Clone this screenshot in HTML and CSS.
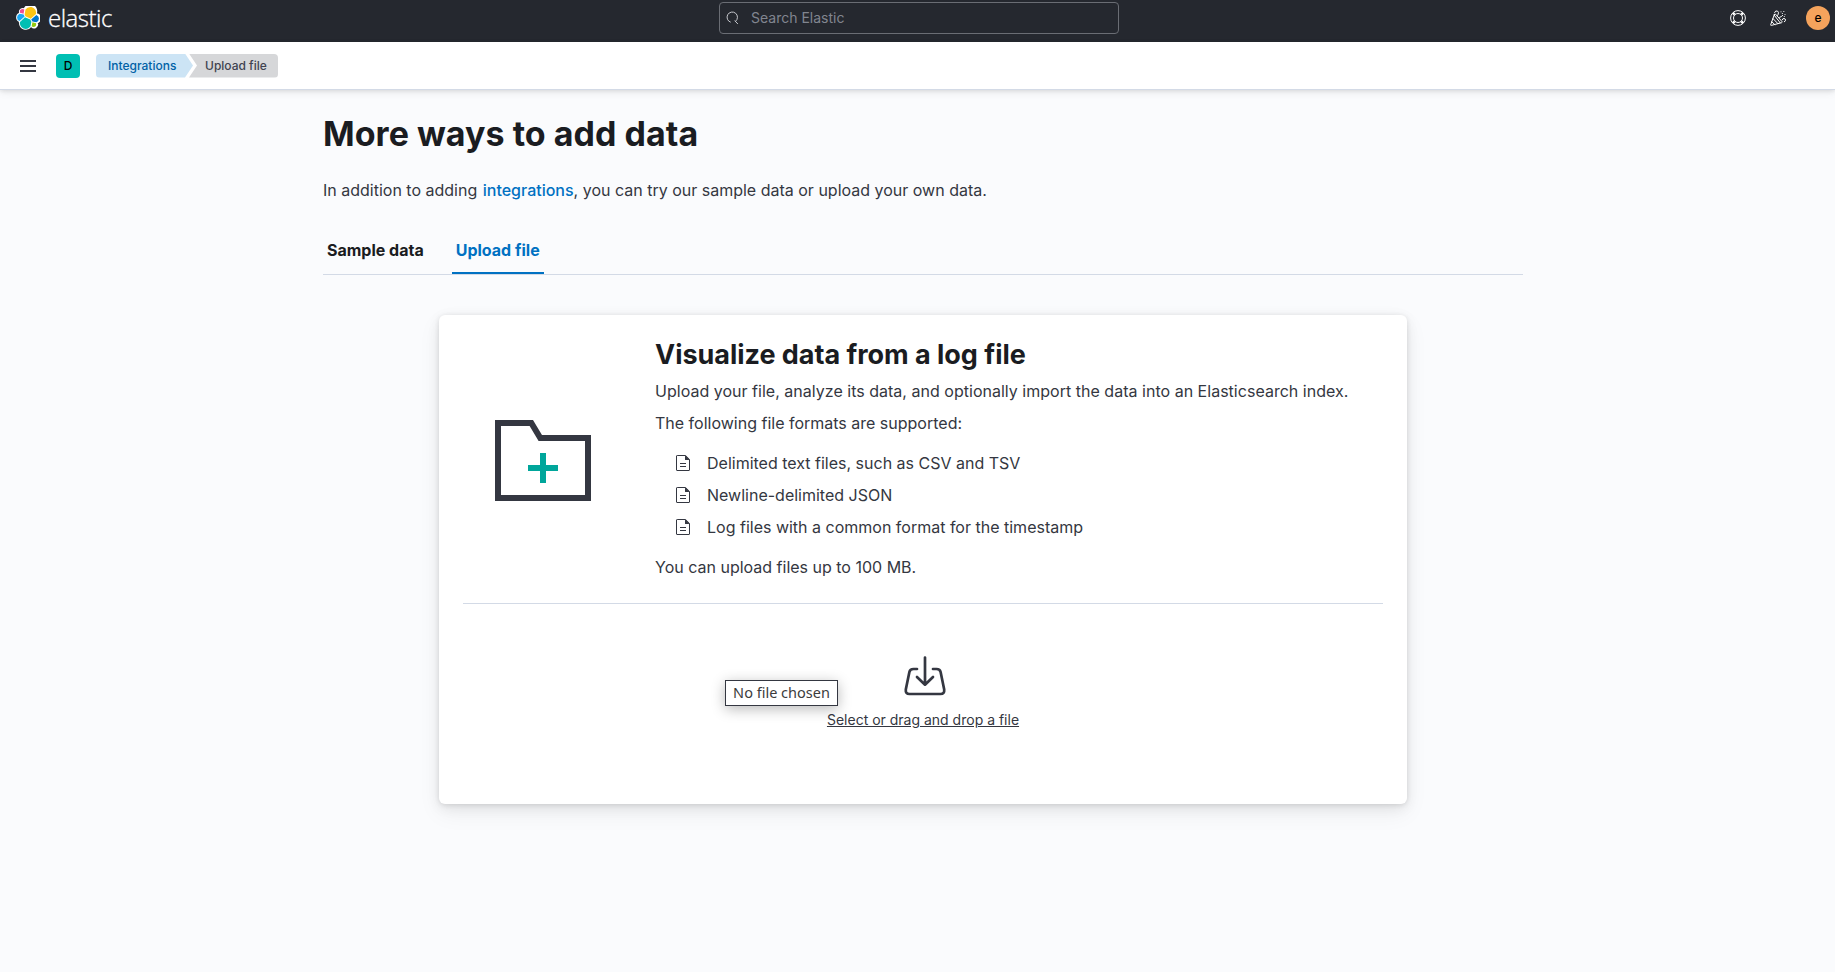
FILE: index.html
```html
<!DOCTYPE html>
<html lang="en">
<head>
<meta charset="utf-8">
<title>Upload file - Elastic</title>
<link rel="stylesheet" href="styles.css">
</head>
<body>
<header class="topbar">
  <a class="brand">
    <svg class="brand-mark" viewBox="0 0 32 32">
      <path class="halo" d="M5.300 9A3.800 3.800 0 0 1 11.100 4.730 7.720 7.720 0 0 1 26.800 9.230L26.650 10.900A5.300 5.300 0 0 1 27.120 21.800 3.800 3.800 0 0 1 20.870 27.160L19.300 27.160A7.750 7.750 0 0 1 5.200 22.700L4.800 20.130A5.290 5.290 0 0 1 4.870 10.210z"/>
      <path fill="#fec514" d="M12.58 13.787l7.002 3.211 7.066-6.213a7.854 7.854 0 00.152-1.557c0-4.287-3.47-7.776-7.735-7.776a7.722 7.722 0 00-6.384 3.379l-1.176 6.126 1.075 2.83z"/>
      <path fill="#00bfb3" d="M5.333 21.215a7.973 7.973 0 00-.151 1.57c0 4.3 3.48 7.798 7.757 7.798 2.573 0 4.98-1.281 6.428-3.422l1.166-6.111-1.556-2.991-7.03-3.215-6.614 6.371z"/>
      <path fill="#f04e98" d="M5.288 9.067l4.8 1.14L11.14 4.73a3.774 3.774 0 00-2.298-.78 3.815 3.815 0 00-3.801 3.822c0 .442.084.878.247 1.295z"/>
      <path fill="#1ba9f5" d="M4.871 10.214A5.294 5.294 0 001.4 15.19a5.275 5.275 0 003.383 4.94l6.733-6.117-1.236-2.655-5.41-1.144z"/>
      <path fill="#93c90e" d="M20.868 27.163c.659.509 1.46.79 2.292.79a3.797 3.797 0 003.785-3.816c0-.444-.084-.88-.247-1.295l-4.795-1.126-1.035 5.447z"/>
      <path fill="#07c" d="M21.846 20.565l5.274 1.233a5.33 5.33 0 003.48-5.004 5.29 5.29 0 00-3.396-4.94l-6.9 6.07 1.542 2.641z"/>
    </svg>
    <span class="brand-name">elastic</span>
  </a>
  <div class="search">
    <svg class="search-icon" viewBox="0 0 16 16" fill="none" stroke="currentColor"><path d="M5.700 12.200A5.200 5.200 0 1 1 10.500 11.300M9.700 10.600l3.200 3.400"/></svg>
    <span>Search Elastic</span>
  </div>
  <div class="actions">
    <svg class="icon" viewBox="0 0 16 16" fill="none" stroke="currentColor"><circle cx="8" cy="8" r="7.400"/><circle cx="8" cy="8" r="4.500"/><path stroke-width="2.600" d="M2.900 2.900l1.800 1.800M13.100 2.900l-1.800 1.800M2.900 13.100l1.800-1.800M13.100 13.100l-1.800-1.800"/></svg>
    <svg class="icon" viewBox="0 0 16 16" fill="none" stroke="currentColor" stroke-linejoin="round" stroke-linecap="round"><path d="M4.400 4.400L.7 14.700q-.2.8.6.7l10.300-2.700q1-.4.3-1.200L5.700 4.300q-.8-.7-1.300.1zM2.900 8.500l5 5.100M4.200 5.200l6 7.600M1.700 11.700l3.200 3M4.600 2.500Q5.500.2 7.400 1q1.700.9.8 3.300-.4 1.200-1 1.500M12.200 9.800q.4-1.400 1.800-1.300 1.700.3 1.500 1.700-.1 1.300-1.200 1.600M9.600 7.400q2-.6 3.100-2M11 1.800v.1M13.800 1.500v.1M12.400 3.400v.1M15 4.600v.1M14.300 6.400v.1"/></svg>
    <span class="avatar">e</span>
  </div>
</header>
<nav class="subbar">
  <svg class="menu" viewBox="0 0 16 12" fill="currentColor"><path d="M0 0h16v2H0zM0 5h16v2H0zM0 10h16v2H0z"/></svg>
  <span class="space">D</span>
  <div class="crumbs"><a class="crumb first">Integrations</a><span class="crumb last">Upload file</span></div>
</nav>
<main class="page">
  <h1>More ways to add data</h1>
  <p class="intro">In addition to adding <a>integrations</a>, you can try our sample data or upload your own data.</p>
  <div class="tabs"><a class="tab">Sample data</a><a class="tab active">Upload file</a></div>
  <section class="card">
    <div class="overview">
      <svg class="folder" viewBox="0 0 96 81"><path fill="none" stroke="#343741" stroke-width="6" d="M3 3h33.300l9 15H93v60H3z"/><path fill="#00a69b" d="M45 33h6v12h12v6H51v12h-6V51H33v-6h12z"/></svg>
      <div class="copy">
        <h2>Visualize data from a log file</h2>
        <p class="lead">Upload your file, analyze its data, and optionally import the data into an Elasticsearch index.</p>
        <p>The following file formats are supported:</p>
        <ul>
          <li><svg viewBox="0 0 14 16"><path fill="none" stroke="currentColor" d="M1.200.5H9.600L13.500 4.400V15q0 .5-.5.5H1Q.5 15.500.5 15V1Q.5.5 1.200.5zM4 8.500h6M4 11.500h6"/><path fill="currentColor" d="M9 .3L13.700 5H9.500Q9 5 9 4.500z"/></svg>Delimited text files, such as CSV and TSV</li>
          <li><svg viewBox="0 0 14 16"><path fill="none" stroke="currentColor" d="M1.200.5H9.600L13.500 4.400V15q0 .5-.5.5H1Q.5 15.500.5 15V1Q.5.5 1.200.5zM4 8.500h6M4 11.500h6"/><path fill="currentColor" d="M9 .3L13.700 5H9.500Q9 5 9 4.500z"/></svg>Newline-delimited JSON</li>
          <li><svg viewBox="0 0 14 16"><path fill="none" stroke="currentColor" d="M1.200.5H9.600L13.500 4.400V15q0 .5-.5.5H1Q.5 15.500.5 15V1Q.5.5 1.200.5zM4 8.500h6M4 11.500h6"/><path fill="currentColor" d="M9 .3L13.700 5H9.500Q9 5 9 4.500z"/></svg>Log files with a common format for the timestamp</li>
        </ul>
        <p>You can upload files up to 100 MB.</p>
      </div>
    </div>
    <div class="drop">
      <svg class="import" viewBox="0 0 42 40" fill="none" stroke="currentColor" stroke-width="2.700" stroke-linecap="round" stroke-linejoin="round"><path d="M13 13H9.500Q6 13 5.400 16L1.800 33.500Q1.300 38 5.500 38H36.500Q40.700 38 40.200 33.500L36.600 16Q36 13 32.500 13H29M21 1.500V28.500M13 21l8 7.700 8-7.700"/></svg>
      <span class="drop-text">Select or drag and drop a file</span>
      <span class="tip">No file chosen</span>
    </div>
  </section>
</main>
</body>
</html>
```
FILE: styles.css
```css
* { box-sizing: border-box; }
body { margin: 0; min-height: 972px; background: #fafbfd; color: #343741; font: 16px/24px Inter, sans-serif; }
h1, h2, p, ul { margin: 0; padding: 0; }
.topbar { height: 42px; background: #25282f; display: grid; grid-template-columns: 1fr 400px 1fr; align-items: start; padding: 0 5px 0 16px; color: #fff; }
.brand { display: flex; align-items: center; height: 36px; gap: 8px; }
.brand-mark { width: 24px; height: 24px; }
.halo { fill: #fff; stroke: #fff; stroke-width: 2.400; stroke-linejoin: round; }
.brand-name { font: 300 24px/30px "Open Sans", sans-serif; letter-spacing: -.5px; -webkit-text-stroke: .3px #fff; }
.search { height: 32px; margin-top: 2px; margin-left: -4px; width: 400px; border: 1px solid #6a6d74; border-radius: 4px; display: flex; align-items: center; padding-left: 5px; gap: 10px; font-size: 14px; color: #81858f; }
.search-icon { width: 16px; height: 16px; color: #c5c7cc; }
.search span { line-height: 20px; }
.actions { display: flex; justify-content: flex-end; align-items: center; height: 36px; }
.icon { width: 16px; height: 16px; margin-right: 24px; }
.icon + .icon { margin-right: 20px; }
.avatar { width: 24px; height: 24px; border-radius: 50%; background: #f5a35c; color: #000; font-size: 12px; font-weight: 500; line-height: 24px; text-align: center; }
.subbar { height: 48px; background: #fff; border-bottom: 1px solid #d3dae6; box-shadow: 0 1px 4px rgba(0,0,0,.1), 0 3px 8px rgba(0,0,0,.06); display: flex; align-items: center; padding-left: 20px; }
.menu { width: 16px; height: 12px; color: #343741; }
.space { width: 24px; height: 24px; margin-left: 20px; border-radius: 4px; background: #00bfb3; color: #000; font-size: 12px; font-weight: 500; line-height: 24px; text-align: center; }
.crumbs { display: flex; margin-left: 16px; font-size: 12px; font-weight: 500; line-height: 24px; }
.crumb { height: 24px; }
.first { width: 97px; padding-left: 12px; background: #cce4f5; color: #0061a6; border-radius: 4px 0 0 4px; clip-path: polygon(0 0, 89px 0, 100% 50%, 89px 100%, 0 100%); }
.last { width: 89px; margin-left: -4px; padding-left: 16px; background: #d6d7d9; color: #404350; border-radius: 0 4px 4px 0; clip-path: polygon(0 0, 100% 0, 100% 100%, 0 100%, 8px 50%); }
.page { width: 1200px; margin-left: 323px; padding-top: 24px; }
h1 { font-size: 34px; line-height: 40px; font-weight: 700; color: #1a1c21; letter-spacing: .03px; }
.intro { margin-top: 24px; }
.intro a { margin-left: 1px; color: #0071c2; font-weight: 500; }
.tabs { display: flex; gap: 24px; height: 49px; margin-top: 24px; border-bottom: 1px solid #d3dae6; }
.tab { padding: 0 4px; line-height: 48px; font-weight: 700; color: #1a1c21; }
.active { color: #0071c2; box-shadow: inset 0 -2px #0071c2; }
.card { width: 968px; height: 489px; margin: 40px auto 0; padding: 24px; background: #fff; border-radius: 6px; box-shadow: 0 1px 5px rgba(0,0,0,.1), 0 3.600px 13px rgba(0,0,0,.07), 0 8.400px 23px rgba(0,0,0,.06); }
.overview { display: flex; align-items: center; height: 265px; padding-bottom: 22px; border-bottom: 1px solid #d3dae6; }
.folder { width: 96px; height: 81px; margin-left: 32px; }
.copy { margin-left: 64px; align-self: flex-start; white-space: nowrap; }
h2 { font-size: 27px; line-height: 32px; font-weight: 700; color: #1a1c21; letter-spacing: -.03px; }
.copy p { margin-top: 8px; }
.copy .lead { letter-spacing: .018px; }
.copy ul { margin: 16px 0; list-style: none; display: grid; gap: 8px; }
li { display: flex; align-items: center; padding-left: 21px; gap: 17px; }
li svg { width: 14px; height: 16px; }
.drop { position: relative; display: flex; flex-direction: column; align-items: center; padding-top: 52px; font-size: 14px; }
.import { width: 42px; height: 40px; margin-left: 3px; }
.drop-text { margin-top: 12px; text-decoration: underline; }
.tip { position: absolute; left: 262px; top: 76px; width: 113px; height: 26px; border: 1px solid #343741; background: #fff; box-shadow: 0 3px 14px rgba(0,0,0,.28); font: 14.500px/23px "Noto Sans", sans-serif; text-align: center; color: #3c3c3c; }
```
